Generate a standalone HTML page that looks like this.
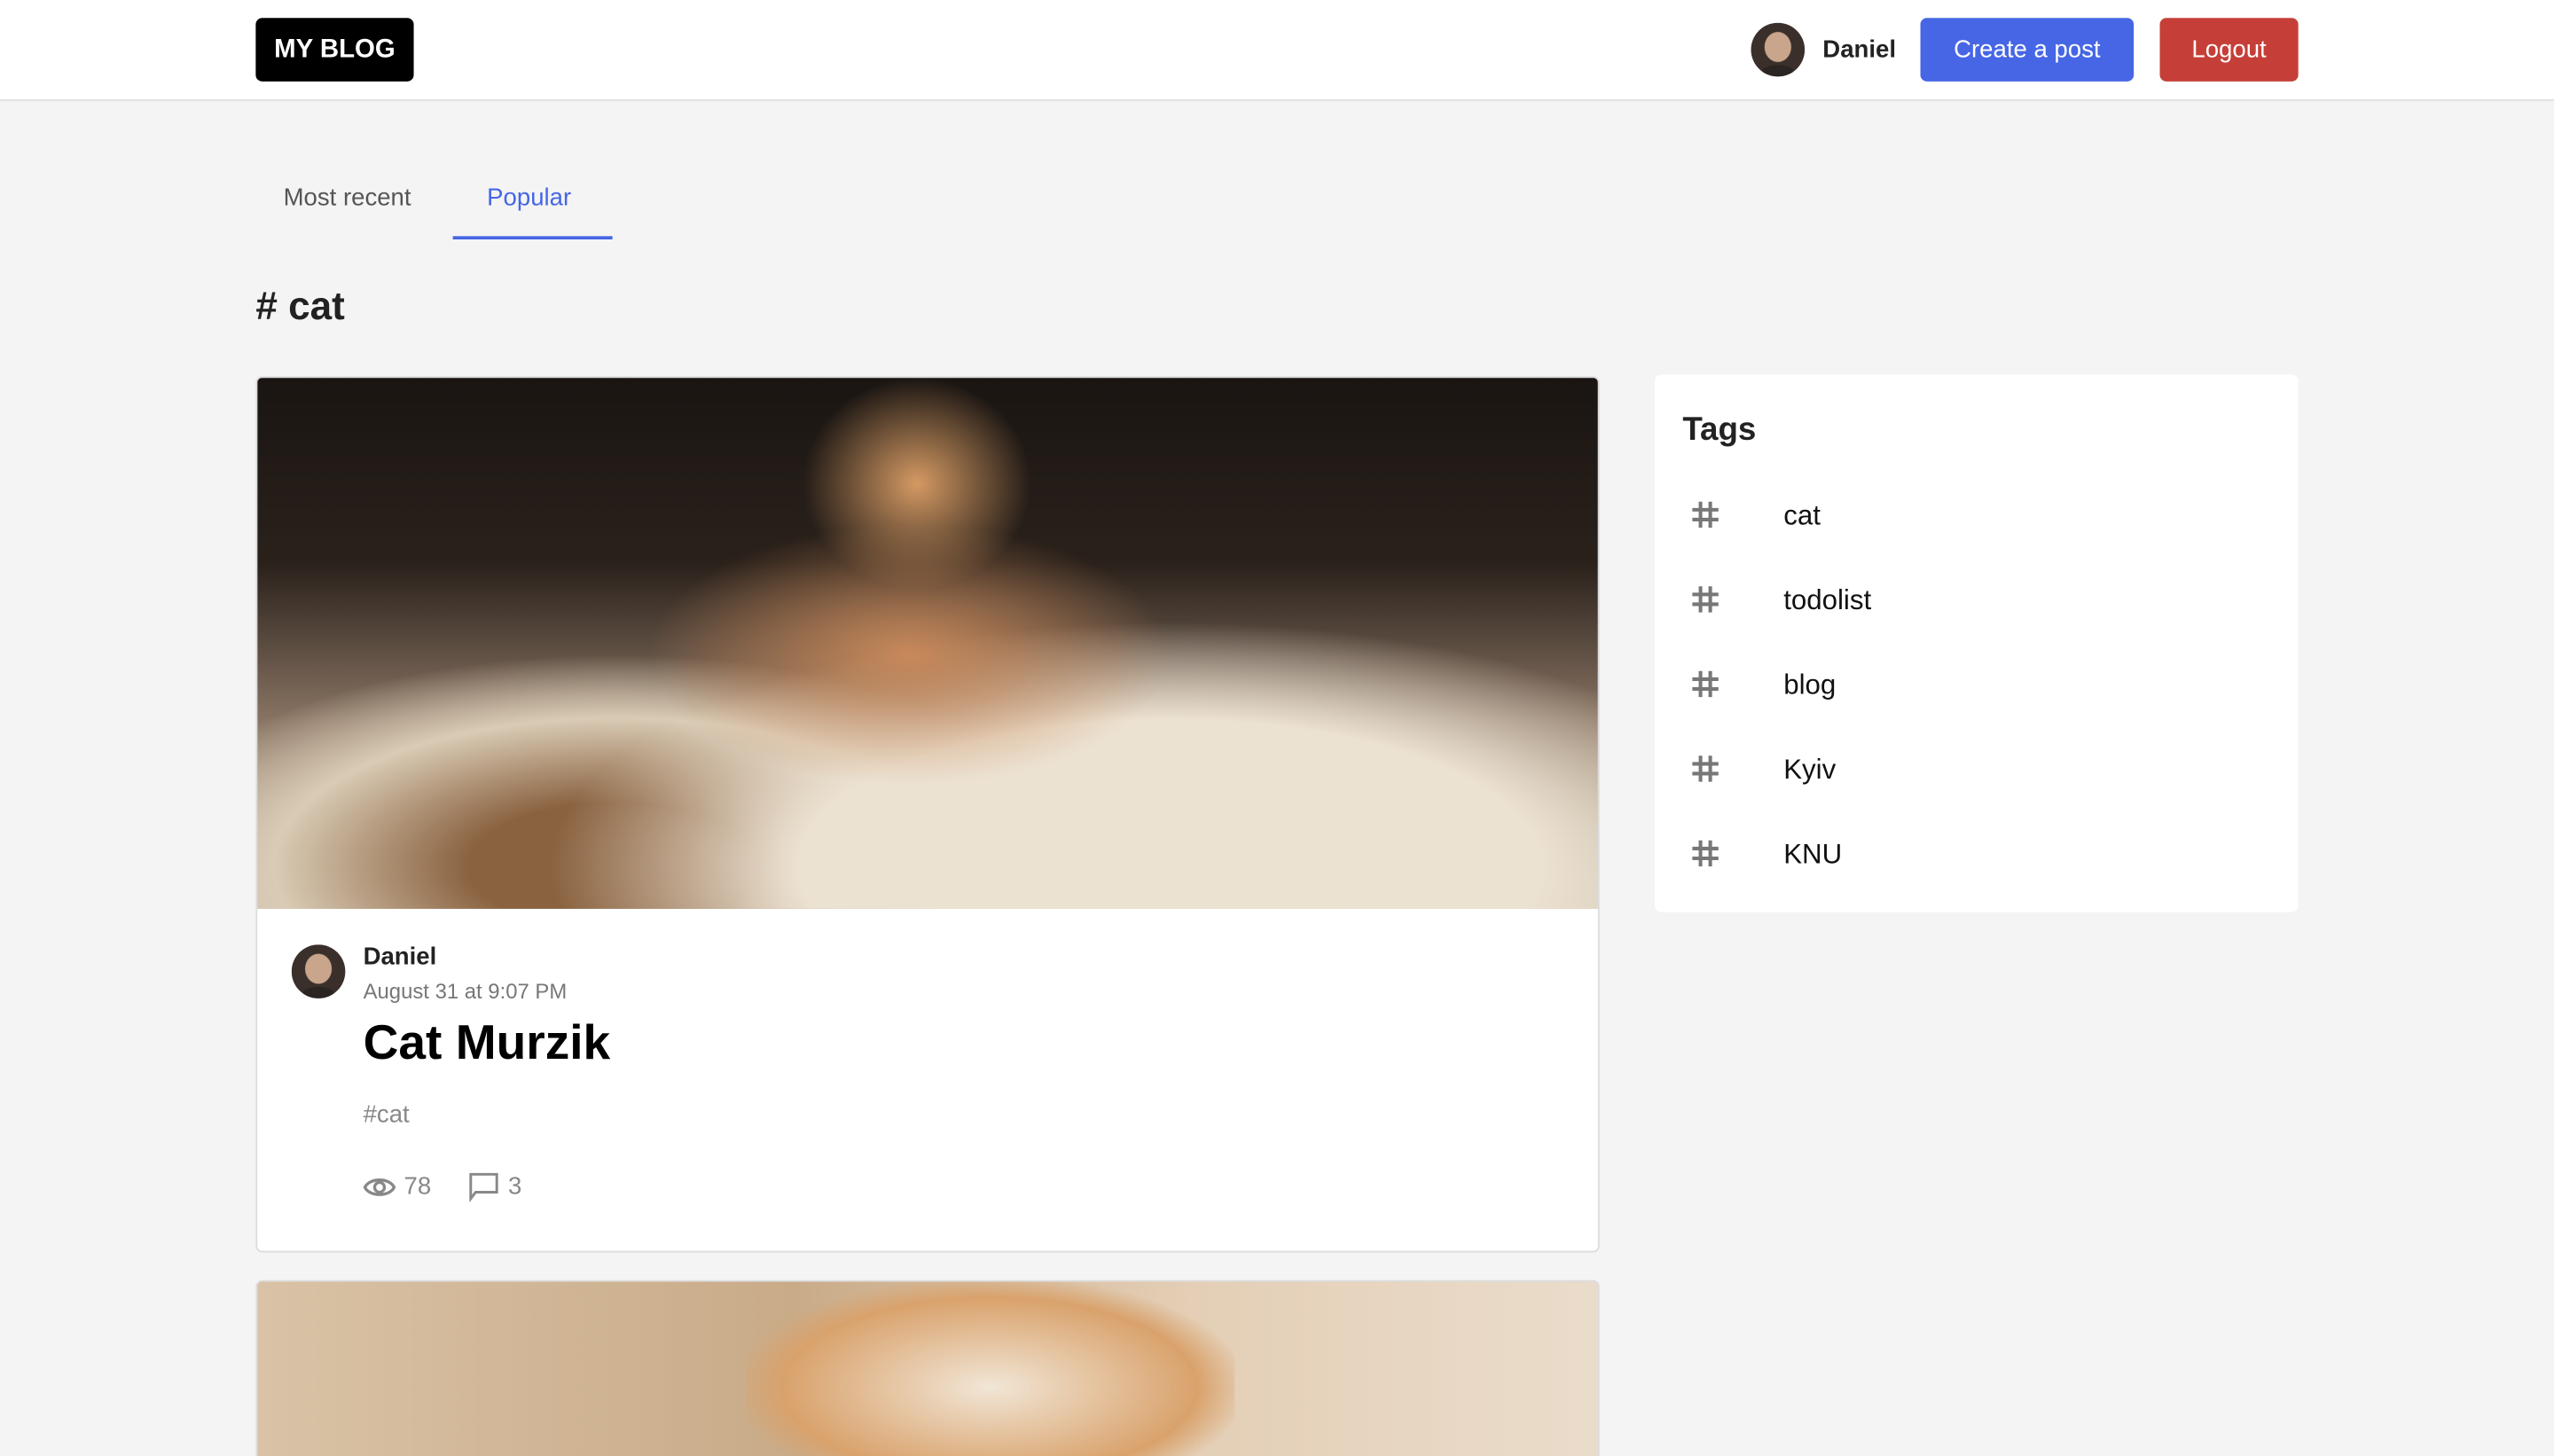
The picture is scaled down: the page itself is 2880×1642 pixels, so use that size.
<!DOCTYPE html>
<html><head><meta charset="utf-8"><style>
html,body{margin:0;padding:0;width:2880px;height:1642px;overflow:hidden;background:#f4f4f4}
#w{position:absolute;left:0;top:0;width:1568px;height:894px;transform:scale(1.836735);transform-origin:0 0;font-family:"Liberation Sans",sans-serif;background:#f4f4f4;overflow:hidden}
.a{position:absolute}
.hdr{left:0;top:0;width:1568px;height:61px;background:#fff;border-bottom:1px solid #e0e0e0}
.btn{border-radius:4px;color:#fff;font-size:15px;display:flex;align-items:center;justify-content:center}
.av{border-radius:50%;background:radial-gradient(ellipse 40% 45% at 50% 45%,#c9a58c 0 60%,#3a2f2a 64% 100%),#cfcac3;overflow:hidden}
.av::after{content:"";position:absolute;left:20%;bottom:0;width:60%;height:22%;background:#2a2522;border-radius:50% 50% 0 0}
.card{background:#fff;border:1px solid #dcdcdc;border-radius:4px;overflow:hidden}
.tag{left:1095px;font-size:17px;color:#111}
.hash{left:1038px}
</style></head><body><div id="w">
<div class="a hdr"></div>
<div class="a btn" style="left:157px;top:11px;width:97px;height:39px;background:#000;font-weight:bold;font-size:16px">MY BLOG</div>
<div class="a av" style="left:1075px;top:14px;width:33px;height:33px"></div>
<div class="a" style="left:1119px;top:22px;font-size:15px;font-weight:bold;color:#222">Daniel</div>
<div class="a btn" style="left:1179px;top:11px;width:131px;height:39px;background:#4666e5">Create a post</div>
<div class="a btn" style="left:1326px;top:11px;width:85px;height:39px;background:#c53f38">Logout</div>

<div class="a" style="left:174px;top:113px;font-size:15px;color:#555">Most recent</div>
<div class="a" style="left:299px;top:113px;font-size:15px;color:#4666e5">Popular</div>
<div class="a" style="left:278px;top:145px;width:98px;height:2px;background:#4666e5"></div>
<div class="a" style="left:157px;top:175px;font-size:24px;font-weight:bold;color:#222"># cat</div>

<div class="a card" style="left:157px;top:231px;width:823px;height:536px">
 <div style="height:326px;background:
 radial-gradient(ellipse 70px 65px at 405px 65px,#d49a63,transparent 100%),
 radial-gradient(ellipse 160px 80px at 400px 170px,#c8895a,transparent 100%),
 radial-gradient(ellipse 380px 150px at 560px 300px,#ece2d2 0 60%,transparent 100%),
 radial-gradient(ellipse 300px 130px at 220px 300px,#8a6240 0 30%,#d9cbb5 70%,transparent 100%),
 linear-gradient(#1a1512,#2a211b 35%,#8a7564 65%,#cbbca5)"></div>
</div>
<div class="a av" style="left:179px;top:580px;width:33px;height:33px"></div>
<div class="a" style="left:223px;top:579px;font-size:15px;font-weight:bold;color:#222">Daniel</div>
<div class="a" style="left:223px;top:601px;font-size:13px;color:#777">August 31 at 9:07 PM</div>
<div class="a" style="left:223px;top:624px;font-size:30px;font-weight:bold;color:#000">Cat Murzik</div>
<div class="a" style="left:223px;top:676px;font-size:15px;color:#888">#cat</div>
<svg class="a" style="left:223px;top:721px" width="20" height="16" viewBox="0 0 20 16"><path d="M1 8C4 2 16 2 19 8C16 14 4 14 1 8Z" fill="none" stroke="#888" stroke-width="1.8"/><circle cx="10" cy="8" r="3" fill="none" stroke="#888" stroke-width="1.8"/></svg>
<div class="a" style="left:248px;top:720px;font-size:15px;color:#888">78</div>
<svg class="a" style="left:288px;top:720px" width="18" height="18" viewBox="0 0 18 18"><path d="M1 1H17V12H4L1 16Z" fill="none" stroke="#888" stroke-width="1.6"/></svg>
<div class="a" style="left:312px;top:720px;font-size:15px;color:#888">3</div>

<div class="a card" style="left:157px;top:786px;width:823px;height:130px;background:linear-gradient(90deg,#d9c2a6,#c9ab88 40%,#e4cfb6 70%,#eadccb)">
 <div style="position:absolute;left:300px;top:0;width:300px;height:108px;background:radial-gradient(ellipse at 50% 60%,#f1e6d6,#d9a26c 60%,transparent 75%)"></div>
</div>

<div class="a" style="left:1016px;top:230px;width:395px;height:330px;background:#fff;border-radius:4px"></div>
<div class="a" style="left:1033px;top:253px;font-size:20px;color:#222;font-weight:bold">Tags</div>
<svg width="0" height="0" style="position:absolute"><defs><symbol id="h" viewBox="0 0 18 18"><path d="M6 1V17M12 1V17M1 6H17M1 12H17" stroke="#777" stroke-width="2.2" fill="none"/></symbol></defs></svg>
<svg class="a hash" style="top:307px" width="18" height="18"><use href="#h"/></svg><div class="a tag" style="top:307px">cat</div>
<svg class="a hash" style="top:359px" width="18" height="18"><use href="#h"/></svg><div class="a tag" style="top:359px">todolist</div>
<svg class="a hash" style="top:411px" width="18" height="18"><use href="#h"/></svg><div class="a tag" style="top:411px">blog</div>
<svg class="a hash" style="top:463px" width="18" height="18"><use href="#h"/></svg><div class="a tag" style="top:463px">Kyiv</div>
<svg class="a hash" style="top:515px" width="18" height="18"><use href="#h"/></svg><div class="a tag" style="top:515px">KNU</div>
</div></body></html>
